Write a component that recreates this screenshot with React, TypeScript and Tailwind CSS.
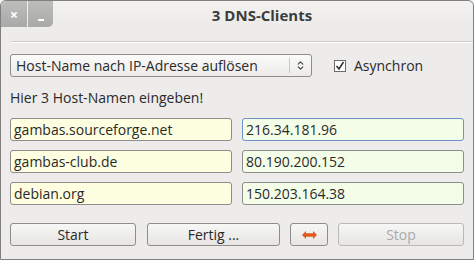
import { ChevronsUpDown } from "lucide-react";

const font = { fontFamily: '"Open Sans", "DejaVu Sans", sans-serif' };

function Field({ value, tone, focus }: { value: string; tone: "host" | "ip"; focus?: boolean }) {
  return (
    <div
      className={`flex h-[23px] w-[222px] items-center rounded-[3px] border px-[3px] text-[14px] text-[#2a2a2a] ${
        tone === "host" ? "bg-[#fefee0]" : "bg-[#f4fde8]"
      } ${focus ? "border-[#6d94c6]" : "border-[#8d8d8d]"}`}
    >
      {value}
    </div>
  );
}

function Button({ children, width, disabled }: { children: React.ReactNode; width: string; disabled?: boolean }) {
  return (
    <div
      className={`flex h-[23px] items-center justify-center rounded-[3px] border bg-gradient-to-b from-[#f7f7f6] to-[#e6e5e3] text-[14px] ${width} ${
        disabled ? "border-[#b9b9b9] text-[#a9a9a9]" : "border-[#8e8e8e] text-[#2a2a2a]"
      }`}
    >
      {children}
    </div>
  );
}

export default function App() {
  return (
    <div style={font} className="h-[260px] w-[474px] bg-[#f2f1f0]">
      <div className="flex h-[260px] w-[474px] flex-col rounded-t-[6px] border border-[#7f7f7f] bg-[#edeceb]">
        {/* title bar */}
        <div className="relative flex h-[26px] items-center justify-center rounded-t-[6px] bg-gradient-to-b from-[#f3f2f1] to-[#ecebea]">
          <div className="absolute left-0 top-0 flex h-[26px]">
            <div className="flex w-[26px] items-center justify-center rounded-tl-[5px] bg-gradient-to-b from-[#bdbdbc] to-[#a9a9a8] text-[14px] font-bold text-white">
              ×
            </div>
            <div className="ml-px flex w-[25px] items-end justify-center rounded-br-[5px] bg-gradient-to-b from-[#bdbdbc] to-[#a9a9a8] pb-[6px]">
              <div className="h-[2px] w-[6px] bg-white" />
            </div>
          </div>
          <span className="ml-[50px] mt-[2px] text-[15px] font-bold text-[#3c3c3c]">3 DNS-Clients</span>
        </div>

        <div className="ml-[10px] mt-[14px] h-px bg-[#cfcecc]" />
        <div className="ml-[10px] h-px bg-white" />

        <div className="mt-[11px] flex items-center px-[9px]">
          <div className="flex h-[23px] w-[302px] items-center rounded-[3px] border border-[#8e8e8e] bg-gradient-to-b from-[#fbfbfa] to-[#ecebe9] text-[14px] text-[#2a2a2a]">
            <span className="flex-1 pl-[5px]">Host-Name nach IP-Adresse auflösen</span>
            <div className="h-[15px] w-px bg-[#c9c9c9]" />
            <ChevronsUpDown className="mx-[5px] size-[11px] text-[#444]" strokeWidth={2.5} />
          </div>
          <div className="ml-[22px] flex size-[12px] items-center justify-center border border-[#6a6a6a] bg-white">
            <svg width="10" height="10" viewBox="0 0 10 10">
              <path d="M1.5 5 L4 8 L8.5 1" fill="none" stroke="#2a2a2a" strokeWidth="1.5" />
            </svg>
          </div>
          <span className="ml-[8px] text-[14px] text-[#2a2a2a]">Asynchron</span>
        </div>

        <div className="ml-[9px] mt-[10px] text-[14px] text-[#2a2a2a]">Hier 3 Host-Namen eingeben!</div>

        <div className="mt-[10px] flex flex-col gap-[9px] px-[9px]">
          <div className="flex justify-between">
            <Field value="gambas.sourceforge.net" tone="host" />
            <Field value="216.34.181.96" tone="ip" focus />
          </div>
          <div className="flex justify-between">
            <Field value="gambas-club.de" tone="host" />
            <Field value="80.190.200.152" tone="ip" />
          </div>
          <div className="flex justify-between">
            <Field value="debian.org" tone="host" />
            <Field value="150.203.164.38" tone="ip" />
          </div>
        </div>

        <div className="mt-[18px] flex items-center px-[9px]">
          <Button width="w-[126px]">Start</Button>
          <div className="ml-[11px]">
            <Button width="w-[133px]">Fertig ...</Button>
          </div>
          <div className="ml-[10px]">
            <Button width="w-[38px]">
              <svg width="15" height="8" viewBox="0 0 15 8">
                <path d="M0 4 L4 0 L4 2.3 L11 2.3 L11 0 L15 4 L11 8 L11 5.7 L4 5.7 L4 8 Z" fill="#e05a1f" />
              </svg>
            </Button>
          </div>
          <div className="ml-[10px]">
            <Button width="w-[126px]" disabled>
              Stop
            </Button>
          </div>
        </div>
      </div>
    </div>
  );
}
